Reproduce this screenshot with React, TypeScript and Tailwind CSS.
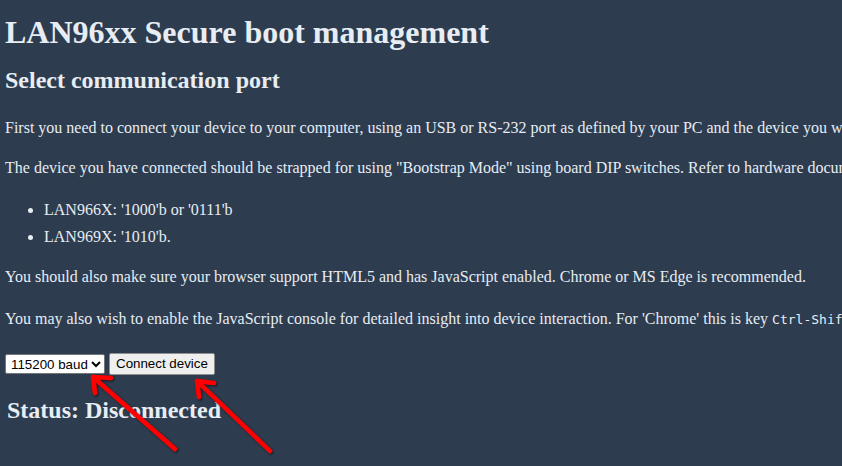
import React from "react";

export default function App() {
  return (
    <div className="relative w-[842px] h-[466px] overflow-hidden bg-[#2d3c4f] text-[#e7edf3] font-['Liberation_Serif',serif]">
      <div className="px-[5px] pt-[12px] whitespace-nowrap">
        <h1 className="text-[32px] font-bold leading-[40px]">LAN96xx Secure boot management</h1>
        <h2 className="mt-[13px] text-[24px] font-bold leading-[30px]">Select communication port</h2>
        <p className="mt-[23px] text-[16px] leading-[20px]">
          First you need to connect your device to your computer, using an USB or RS-232 port as defined by your PC and the device you wish to manage.
        </p>
        <p className="mt-[20px] text-[16px] leading-[20px]">
          The device you have connected should be strapped for using "Bootstrap Mode" using board DIP switches. Refer to hardware documentation.
        </p>
        <ul className="mt-[18px] list-disc pl-[39px] text-[16px] leading-[27px]">
          <li>LAN966X: '1000'b or '0111'b</li>
          <li>LAN969X: '1010'b.</li>
        </ul>
        <p className="mt-[17px] text-[16px] leading-[20px]">
          You should also make sure your browser support HTML5 and has JavaScript enabled. Chrome or MS Edge is recommended.
        </p>
        <p className="mt-[22px] text-[16px] leading-[20px]">
          You may also wish to enable the JavaScript console for detailed insight into device interaction. For 'Chrome' this is key{" "}
          <code className="font-['DejaVu_Sans_Mono',monospace] text-[13px]">Ctrl-Shift-I</code>.
        </p>
        <div className="mt-[23px] flex items-center gap-[4px]">
          <select className="h-[20px] bg-white text-black border border-[#767676] rounded-[2px] font-['Liberation_Sans',Arial,sans-serif] text-[13.33px] pl-[1px]">
            <option>115200 baud</option>
          </select>
          <button className="h-[22px] px-[6px] bg-[#efefef] text-black border border-[#8f8f8f] rounded-[2px] font-['Liberation_Sans',Arial,sans-serif] text-[13.33px]">
            Connect device
          </button>
        </div>
        <h2 className="mt-[20px] ml-[2px] text-[24px] font-bold leading-[30px]">Status: Disconnected</h2>
      </div>
      <svg className="absolute left-0 top-0 pointer-events-none" width="842" height="466">
        <defs>
          <filter id="sh" x="-20%" y="-20%" width="140%" height="140%">
            <feDropShadow dx="1" dy="1" stdDeviation="1" floodColor="#000" floodOpacity="0.7" />
          </filter>
        </defs>
        <g filter="url(#sh)" stroke="#ff0000" strokeWidth="4.5" strokeLinecap="round" strokeLinejoin="round" fill="none">
          <path d="M175 449 L93 377" />
          <path d="M93 377 L111 378 M93 377 L95 393" />
          <path d="M270 451 L197 381" />
          <path d="M197 381 L214 383 M197 381 L199 397" />
        </g>
      </svg>
    </div>
  );
}
